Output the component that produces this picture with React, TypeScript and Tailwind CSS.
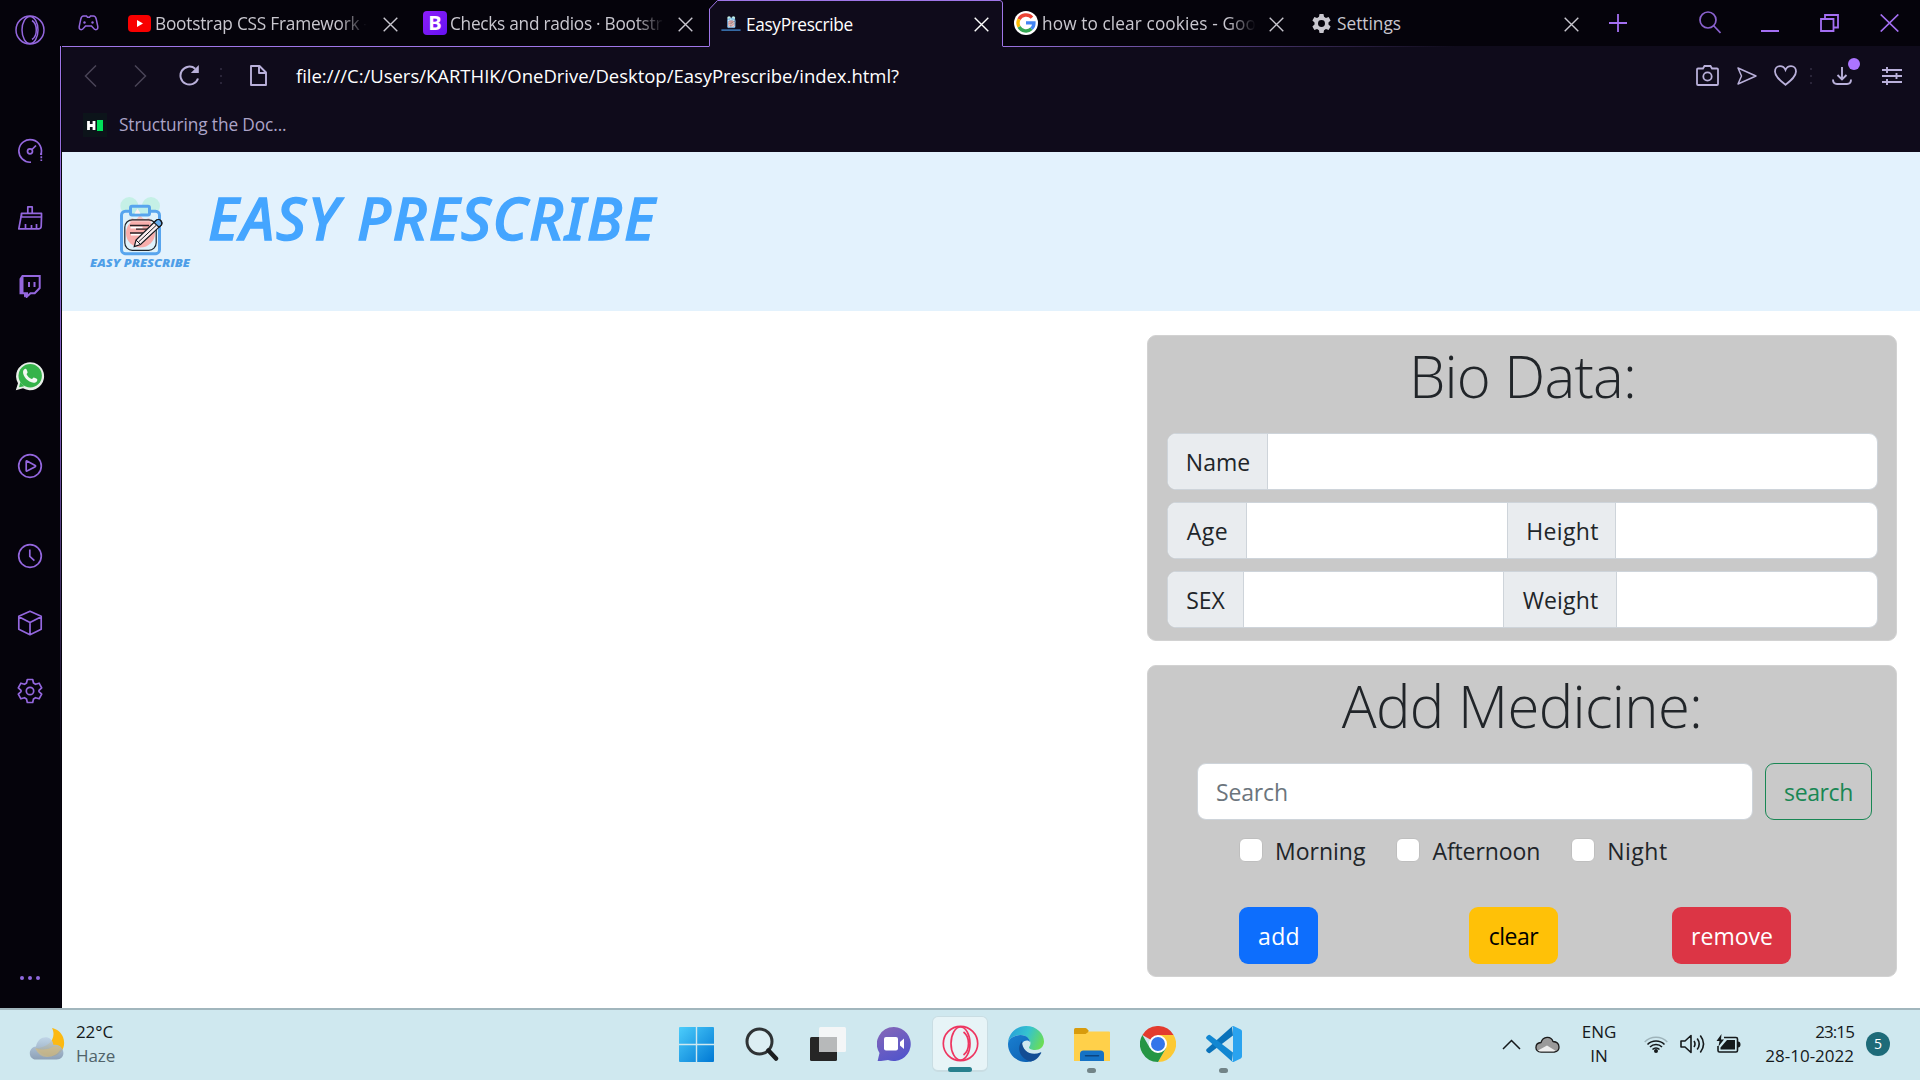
import React, { ReactNode } from "react";

function Svg({ w, h, box, className = "", children }: { w: number; h: number; box?: string; className?: string; children: ReactNode }) {
  return (
    <svg width={w} height={h} viewBox={box ?? `0 0 ${w} ${h}`} fill="none" stroke="currentColor" className={`shrink-0 ${className}`}>
      {children}
    </svg>
  );
}

/* ---------- Browser sidebar ---------- */

function Sidebar() {
  return (
    <aside className="flex w-[60px] shrink-0 flex-col items-center bg-[#05030b] text-[#9467de]">
      <Svg w={30} h={30} className="mt-[15px]">
        <circle cx="15" cy="15" r="14" strokeWidth="1.5" />
        <ellipse cx="15" cy="15" rx="8" ry="13.5" strokeWidth="1.5" />
        <path d="M17 5.500c3.200 2 4.300 5.500 4.300 9.500s-1.100 7.500-4.300 9.500" strokeWidth="1.500" />
      </Svg>
      <Svg w={26} h={26} className="mt-[93px]" box="0 0 26 26">
        <g strokeWidth="1.700">
          <path d="M14 24.200A11.300 11.300 0 1 1 23.700 17" strokeDasharray="60 100" />
          <circle cx="13" cy="13.300" r="2.500" />
          <path d="M15 11.500l4-4" />
          <path d="M24.300 15v8" strokeDasharray="2 1.300" />
        </g>
      </Svg>
      <Svg w={26} h={26} className="mt-[41px]" box="0 0 26 26">
        <g strokeWidth="1.700" strokeLinejoin="round">
          <path d="M10.800 7.500V1.800h4.400v5.700M4.500 12V8.300h20V12M4.500 8.300L4 12h20M4 12L1.800 23.800H22q2 0 2.200-2.500L24.500 12M8.500 23v-4M14.500 23v-3M19.500 23v-4" />
        </g>
      </Svg>
      <Svg w={24} h={24} className="mt-[43px]" box="0 0 24 24">
        <path d="M4.500 2h17.200v12l-5 5.300h-4.200L9 22.500v-3.200H2.500V5z" strokeWidth="2" />
        <path d="M2.500 5v14.300h3V2z" fill="currentColor" strokeWidth="0" />
        <path d="M6.500 19.300v3.500h3z" fill="currentColor" strokeWidth="1" />
        <path d="M11 8v5M16.500 8v5" strokeWidth="2" />
      </Svg>
      <Svg w={30} h={30} className="mt-[63px]">
        <path d="M.8 29.300l2.200-7A14 14 0 1 1 8 27.300z" fill="#e9efe9" strokeWidth="0" />
        <circle cx="15.200" cy="14.800" r="11.700" fill="#35b34a" strokeWidth="0" />
        <path d="M4 26.200l1.300-5 4 4z" fill="#35b34a" strokeWidth="0" />
        <path d="M8 11c0-2 1.700-3.500 2.900-3.200.6.100 1.800 3.200 1.700 3.700-.1.600-1.200 1.300-1 1.800 1 2.200 2.900 3.900 5.200 4.800.6.200 1.300-1.600 1.900-1.600.6 0 3.500 1.300 3.600 1.900.3 1.900-2 3.500-3.700 3.400C13 21.300 8 15.500 8 11z" fill="#f3f8f3" strokeWidth="0" />
      </Svg>
      <Svg w={26} h={26} className="mt-[62px]">
        <circle cx="13" cy="13" r="11.300" strokeWidth="1.700" />
        <path d="M9.200 8.500v9q0 .8.800.5l8.200-4.300q.8-.7 0-1.200L10 8q-.8-.3-.8.500z" strokeWidth="1.700" />
      </Svg>
      <Svg w={26} h={26} className="mt-[64px]">
        <circle cx="13" cy="13" r="11.300" strokeWidth="1.700" />
        <path d="M12.800 6.500v7l4.600 4.200" strokeWidth="1.700" />
      </Svg>
      <Svg w={26} h={26} className="mt-[41px]">
        <path d="M13 1.300l11.200 5v13L13 24.700 1.800 19.300v-13zM1.800 6.800L13 12.500l11.200-5.700M13 12.500v12" strokeWidth="1.700" strokeLinejoin="round" />
      </Svg>
      <Svg w={26} h={26} className="mt-[42px]">
        <path d="M10.300 1.500h5.400l.8 3.600 2 1.200 3.600-1.100 2.600 4.600-2.700 2.500v1.400l2.700 2.500-2.600 4.600-3.600-1.100-2 1.200-.8 3.600h-5.400l-.8-3.600-2-1.200-3.600 1.100-2.600-4.600L4 13.700v-1.400L1.300 9.800l2.600-4.600 3.600 1.100 2-1.200z" strokeWidth="1.700" strokeLinejoin="round" />
        <circle cx="13" cy="13" r="3.700" strokeWidth="1.700" />
      </Svg>
      <div className="mt-[272px] flex gap-1">
        <i className="size-1 rounded-full bg-[#8f68dd]" />
        <i className="size-1 rounded-full bg-[#8f68dd]" />
        <i className="size-1 rounded-full bg-[#8f68dd]" />
      </div>
    </aside>
  );
}

/* ---------- Tab strip ---------- */

function Cross({ className = "" }: { className?: string }) {
  return (
    <Svg w={15} h={15} className={className}>
      <path d="M.7.7l13.600 13.600M14.300.7L.7 14.300" strokeWidth="1.400" />
    </Svg>
  );
}

function ClipboardMark() {
  return (
    <>
      <circle cx="40.300" cy="12" r="9" fill="#c5f0e6" strokeWidth="0" />
      <circle cx="62" cy="12" r="9" fill="#c5f0e6" strokeWidth="0" />
      <rect x="32.500" y="17.200" width="38" height="42.500" rx="4" fill="#dff2fb" stroke="#58a5ee" strokeWidth="3" />
      <circle cx="51.500" cy="39" r="14.500" fill="#f8aeac" strokeWidth="0" />
      <path d="M40 28l3-4 4 2 4-5 4 5 5-2 3 4z" fill="#f8c1bf" strokeWidth="0" />
      <rect x="41.500" y="12.300" width="19" height="8.700" rx="1.500" fill="#bdeeea" stroke="#58a5ee" strokeWidth="3" />
      <path d="M45.500 19.500l3-5 3 5z" fill="#fdeef0" strokeWidth="0" />
      <rect x="35.800" y="25.800" width="31.400" height="30.500" rx="7.500" stroke="#20252b" strokeWidth="1.200" />
      <path d="M41.500 33.500h12M42 40.500h12" stroke="#fff" strokeWidth="2" />
      <path d="M41 31.500h19M47 35.200h12M41 39h13" stroke="#2a2225" strokeWidth="1.300" />
      <path d="M45.300 52.500l1.700-6.500L67 26.500q2.300-2 4.600 0 2.200 2.600.6 4.600L51.500 50.500z" fill="#fbeef0" stroke="#15191e" strokeWidth="1.200" />
      <path d="M65 28.500l2-2q2.300-2 4.600 0 2.200 2.600.6 4.600l-2.200 2z" fill="#68aeef" stroke="#15191e" strokeWidth="1.200" />
      <path d="M47 46l4.500 4.500M49.500 48l17.500-16.500" stroke="#15191e" strokeWidth="1" />
    </>
  );
}

function GoogleMark() {
  return (
    <Svg w={24} h={24}>
      <circle cx="12" cy="12" r="12" fill="#fff" strokeWidth="0" />
      <g strokeWidth="3.400">
        <path d="M18 6.600A8 8 0 0 0 5 8.200" stroke="#ea4335" />
        <path d="M5 8.200a8 8 0 0 0 0 7.600" stroke="#fbbc05" />
        <path d="M5 15.800a8 8 0 0 0 12.400 2" stroke="#34a853" />
        <path d="M17.400 17.800a8 8 0 0 0 2.500-5.900H12" stroke="#4285f4" />
      </g>
    </Svg>
  );
}

function TabTitle({ className, children }: { className: string; children: ReactNode }) {
  return <span className={`mt-0.5 shrink-0 whitespace-nowrap text-[17.25px] leading-6 ${className}`}>{children}</span>;
}

const fade = "[mask-image:linear-gradient(to_right,black_86%,transparent_99%)]";

function TabStrip() {
  return (
    <header className="flex h-[46px] shrink-0 bg-[#05030b] text-[#c9c7cf]">
      <Svg w={21} h={16} className="ml-[16px] mt-[15px] text-[#9467de]">
        <path d="M5.500 1h3l1 1.300h2l1-1.300h3q2 0 2.700 3l1.600 7.500q.3 3.200-2 3.200-1.500 0-2.800-2l-1.500-1.700h-6l-1.500 1.700q-1.300 2-2.800 2-2.300 0-2-3.200L2.800 4Q3.500 1 5.500 1z" strokeWidth="1.500" />
        <circle cx="6.500" cy="7.500" r="1.200" fill="currentColor" strokeWidth="0" />
        <circle cx="14.500" cy="7.500" r="1.200" fill="currentColor" strokeWidth="0" />
      </Svg>

      <div className="ml-[21px] flex h-full w-[295px] items-center pl-2">
        <Svg w={23} h={17} className="mt-px">
          <rect width="23" height="17" rx="4" fill="#f80000" strokeWidth="0" />
          <path d="M9 5v7l6-3.500z" fill="#fff" strokeWidth="0" />
        </Svg>
        <TabTitle className={`ml-1 w-[214px] tracking-[-0.22px] ${fade}`}>Bootstrap CSS Framework -</TabTitle>
        <Cross className="ml-[14px] mt-0.5" />
      </div>

      <div className="flex h-full w-[294px] items-center pl-2">
        <span className="flex h-6 w-6 items-center justify-center rounded-[4px] bg-linear-to-br from-[#8c1cfa] to-[#6610f2] text-[20px] font-bold leading-none text-white">B</span>
        <TabTitle className={`ml-[3px] w-[216px] tracking-[-0.27px] ${fade}`}>Checks and radios · Bootstr</TabTitle>
        <Cross className="ml-[12px] mt-0.5" />
      </div>

      <div className="relative z-10 -mb-px flex h-[47px] w-[294px] items-center text-white">
        <Svg w={294} h={47} className="absolute left-0 top-0">
          <path d="M0 46.500q.5 0 .5-1.500V9L8.500.5H291q2.500.5 2.500 2.500v42q0 1.500.5 1.500V47H0z" fill="#0f0b1b" strokeWidth="0" />
          <path d="M0 46.500q.5 0 .5-1.500V9L8.500.5H291q2.500.5 2.500 2.500v42q0 1.500.5 1.500" stroke="#9f76e8" strokeWidth="1" />
        </Svg>
        <Svg w={20} h={17} box="0 0 100 78" className="relative ml-[12px]">
          <ClipboardMark />
          <path d="M2 72h96" stroke="#3f83c8" strokeWidth="7" />
        </Svg>
        <TabTitle className="relative ml-[5px] w-[216px] tracking-[-0.35px]">EasyPrescribe</TabTitle>
        <Cross className="relative ml-[12px] mt-0.5" />
      </div>

      <div className="flex h-full w-[295px] items-center pl-[11px]">
        <GoogleMark />
        <TabTitle className={`ml-1 w-[216px] tracking-[0.1px] ${fade}`}>how to clear cookies - Goo</TabTitle>
        <Cross className="ml-[11px] mt-0.5" />
      </div>

      <div className="flex h-full w-[294px] items-center pl-[14px]">
        <Svg w={19} h={19} box="0 0 24 24">
          <path
            fill="currentColor"
            strokeWidth="0"
            fillRule="evenodd"
            d="M9.500 0h5l.7 3.600 2.400 1.400L21 3.800l2.500 4.400-2.700 2.400v2.800l2.700 2.400L21 20.200 17.600 19l-2.400 1.400-.7 3.600h-5l-.7-3.600L6.400 19 3 20.200.5 15.800l2.700-2.400v-2.800L.5 8.200 3 3.800 6.400 5l2.400-1.400zM12 7.600a4.400 4.400 0 1 0 0 8.800 4.400 4.400 0 0 0 0-8.800z"
          />
        </Svg>
        <TabTitle className="ml-[6px] w-[216px]">Settings</TabTitle>
        <Cross className="ml-[11px] mt-0.5" />
      </div>

      <div className="flex flex-1 items-center text-[#a46ff2]">
        <Svg w={18} h={18} className="ml-[17px]">
          <path d="M9 0v18M0 9h18" strokeWidth="1.800" />
        </Svg>
        <Svg w={22} h={23} className="-mt-0.5 ml-[72px] text-[#8a62cf]">
          <circle cx="9" cy="9" r="8" strokeWidth="1.700" />
          <path d="M14.500 14.500l7 7.500" strokeWidth="1.700" />
        </Svg>
        <Svg w={18} h={2} className="ml-[40px] mt-4">
          <path d="M0 1h18" strokeWidth="2" />
        </Svg>
        <Svg w={19} h={18} className="ml-[41px]">
          <path d="M1 5h12.500v12H1zM5 5V1h13v12.500h-4.500" strokeWidth="1.800" />
        </Svg>
        <Svg w={19} h={18} className="ml-[41px]">
          <path d="M.7.500l17.600 17M18.300.500L.7 17.500" strokeWidth="1.700" />
        </Svg>
      </div>
    </header>
  );
}

/* ---------- Toolbar and bookmarks ---------- */

function Dots() {
  return (
    <div className="flex flex-col gap-[5px]">
      <i className="size-[2px] bg-[#2a2539]" />
      <i className="size-[2px] bg-[#2a2539]" />
      <i className="size-[2px] bg-[#2a2539]" />
    </div>
  );
}

function Toolbar() {
  return (
    <div className="flex h-[57px] shrink-0 items-center text-[#b9b0da]">
      <Svg w={13} h={22} className="ml-[22px] text-[#494457]">
        <path d="M12 .5L1.500 11 12 21.500" strokeWidth="1.500" />
      </Svg>
      <Svg w={13} h={22} className="ml-[37px] text-[#494457]">
        <path d="M1 .5L11.500 11 1 21.500" strokeWidth="1.500" />
      </Svg>
      <Svg w={21} h={21} className="ml-[32px]">
        <path d="M19 13.500a9 9 0 1 1-2.700-9.800" strokeWidth="2" />
        <path d="M19.800 0v8h-8z" fill="currentColor" strokeWidth="0" />
      </Svg>
      <div className="ml-[20px]">
        <Dots />
      </div>
      <Svg w={17} h={21} className="ml-[28px]">
        <path d="M1 1h8.500l6.500 6.500V20H1zM9 1v7h7" strokeWidth="1.900" strokeLinejoin="round" />
      </Svg>
      <span className="ml-[29px] text-[18.5px] tracking-[-0.02px] text-white">file:///C:/Users/KARTHIK/OneDrive/Desktop/EasyPrescribe/index.html?</span>
      <Svg w={23} h={21} className="ml-auto">
        <path d="M1 4.500q0-1 1-1h5L8.500 1h6L16 3.500h5q1 0 1 1V19q0 1-1 1H2q-1 0-1-1z" strokeWidth="1.800" />
        <circle cx="11.500" cy="11.500" r="4.200" strokeWidth="1.800" />
      </Svg>
      <Svg w={20} h={18} className="ml-[18px]">
        <path d="M1 1l18 8L1 17l3.500-8z" strokeWidth="1.500" strokeLinejoin="round" />
      </Svg>
      <Svg w={23} h={21} className="ml-[17px]">
        <path d="M11.500 19.800C6 15.500 1 11.500 1 6.500 1 3.500 3 1.200 6 1.200c2.500 0 4.500 1.500 5.500 3.800 1-2.300 3-3.800 5.500-3.800 3 0 5 2.300 5 5.300 0 5-5 9-10.500 13.300z" strokeWidth="1.800" />
      </Svg>
      <div className="ml-[13px]">
        <Dots />
      </div>
      <div className="relative ml-[20px]">
        <Svg w={20} h={18}>
          <path d="M10 0v12M5.500 8l4.500 4.500L14.500 8M1 12.500q0 4.500 4 4.500h10q4 0 4-4.500" strokeWidth="1.900" />
        </Svg>
        <i className="absolute -top-[9px] left-4 size-3 rounded-full bg-[#ac74ff]" />
      </div>
      <Svg w={20} h={18} className="ml-[30px] mr-[18px]">
        <path d="M0 3h20M0 9h20M0 15h20M5 0v6M14.500 6v6M5 12v6" strokeWidth="1.900" />
      </Svg>
    </div>
  );
}

function Bookmarks() {
  return (
    <div className="flex h-[48px] shrink-0 items-start pt-[9px]">
      <div className="ml-[21px] flex h-6 w-6 items-center justify-center bg-[#0c141a]">
        <Svg w={16} h={11}>
          <path d="M1.500 1v9M7 1v9M1.500 5.500H7" stroke="#fff" strokeWidth="2.800" />
          <rect x="10" y="0" width="6" height="11" fill="#00e05a" strokeWidth="0" />
        </Svg>
      </div>
      <span className="ml-[12px] text-[17.25px] leading-6 tracking-[-0.1px] text-[#aca4c8]">Structuring the Doc...</span>
    </div>
  );
}

/* ---------- Page ---------- */

function Addon({ className, children }: { className: string; children: ReactNode }) {
  return <span className={`flex shrink-0 items-center justify-center border-[#ced4da] bg-[#e9ecef] ${className}`}>{children}</span>;
}

const group = "flex h-[57px] overflow-hidden rounded-[9px] border border-[#ced4da] bg-white";

function BioData() {
  return (
    <section className="flex h-[306px] flex-col rounded-[9px] border border-[#d2d2d2] bg-[#c9c9c9] pl-[19px] pr-[18px]">
      <h2 className="mt-[4px] text-center text-[58px] font-light leading-[72px] tracking-[-0.78px]">Bio Data:</h2>
      <div className="mt-[21px] flex flex-col gap-3">
        <div className={group}>
          <Addon className="w-[100px] border-r pl-px">Name</Addon>
          <input className="min-w-0 flex-1" />
        </div>
        <div className={group}>
          <Addon className="w-[79px] border-r pl-px tracking-[0.5px]">Age</Addon>
          <input className="w-[260px]" />
          <Addon className="w-[109px] border-x pl-0.5 tracking-[0.3px]">Height</Addon>
          <input className="min-w-0 flex-1" />
        </div>
        <div className={group}>
          <Addon className="w-[76px] border-r">SEX</Addon>
          <input className="w-[259px]" />
          <Addon className="w-[114px] border-x pl-px tracking-[0.15px]">Weight</Addon>
          <input className="min-w-0 flex-1" />
        </div>
      </div>
    </section>
  );
}

function Check({ className = "", label }: { className?: string; label: ReactNode }) {
  return (
    <label className={`flex items-center ${className}`}>
      <input type="checkbox" className="mr-3 size-6 -translate-y-px appearance-none rounded-[6px] border border-[#bfbfbf] bg-white" />
      {label}
    </label>
  );
}

const btn = "flex h-[57px] items-center justify-center rounded-[9px]";

function AddMedicine() {
  return (
    <section className="mt-6 flex h-[312px] flex-col rounded-[9px] border border-[#d2d2d2] bg-[#c9c9c9]">
      <h2 className="mt-[4px] text-center text-[58px] font-light leading-[72px] tracking-[-0.66px]">Add Medicine:</h2>
      <div className="ml-[49px] mt-[21px] flex gap-3">
        <input placeholder="Search" className="h-[57px] w-[556px] rounded-[9px] border border-[#ced4da] bg-white pl-[18px] tracking-[-0.15px] placeholder:text-[#6c757d]" />
        <button className={`${btn} w-[107px] border-[1.5px] border-[#198754] tracking-[-0.4px] text-[#198754]`}>search</button>
      </div>
      <div className="ml-[91px] mt-[13px] flex h-9">
        <Check label="Morning" />
        <Check label="Afternoon" className="ml-[31px] tracking-[-0.1px]" />
        <Check label="Night" className="ml-[31px] tracking-[0.5px]" />
      </div>
      <div className="mt-[38px] flex">
        <button className={`${btn} ml-[91px] w-[79px] bg-[#0d6efd] pl-px tracking-[0.3px] text-white`}>add</button>
        <button className={`${btn} ml-[151px] w-[89px] bg-[#ffc107] tracking-[-0.5px] text-black`}>clear</button>
        <button className={`${btn} ml-[114px] w-[119px] bg-[#dc3545] pl-px text-white`}>remove</button>
      </div>
    </section>
  );
}

function Page() {
  return (
    <main className="flex flex-1 flex-col bg-white text-[23px] leading-9 text-[#212529]">
      <nav className="flex h-[159px] shrink-0 items-start bg-[#e3f2fd]">
        <Svg w={102} h={78} className="ml-[27px] mt-[42px]">
          <ClipboardMark />
          <text x="1" y="72.800" textLength="100" lengthAdjust="spacingAndGlyphs" className="font-['Open_Sans'] text-[10.5px] font-extrabold italic" fill="#4f9fe8" strokeWidth="0">
            EASY PRESCRIBE
          </text>
        </Svg>
        <h1 className="ml-[17px] mt-[20px] font-['Noto_Sans'] text-[58.5px] font-medium italic leading-[90px] tracking-[1.7px] text-[#44a5ff] [-webkit-text-stroke:1.4px_#44a5ff]">EASY PRESCRIBE</h1>
      </nav>
      <div className="ml-auto mr-[23px] mt-6 w-[750px]">
        <BioData />
        <AddMedicine />
      </div>
    </main>
  );
}

/* ---------- Taskbar ---------- */

function TaskIcon({ active, running, children }: { active?: boolean; running?: boolean; children: ReactNode }) {
  return (
    <div className={`relative flex h-14 w-14 items-center justify-center rounded-md ${active ? "border border-b-2 border-[#c9dde3] bg-[#e7f4f7]" : ""}`}>
      {children}
      {active && <i className="absolute -bottom-[2px] left-[15px] h-[5px] w-6 rounded-full bg-[#28808e]" />}
      {running && <i className="absolute -bottom-px left-[23px] h-[5px] w-[9px] rounded-full bg-[#728488]" />}
    </div>
  );
}

function Taskbar() {
  return (
    <footer className="flex h-[72px] shrink-0 items-center border-t-2 border-[#a1b6bd] bg-[#cfe8ef] pb-0.5 text-[17px] leading-6 text-[#15191b]">
      <div className="flex w-[668px] items-center pl-[29px]">
        <Svg w={36} h={32}>
          <defs>
            <linearGradient id="cloud" x1="0" y1="0" x2="0" y2="1">
              <stop offset="0" stopColor="#bdd2e6" />
              <stop offset="1" stopColor="#8496ae" />
            </linearGradient>
          </defs>
          <path d="M23 0c5 10-3 20-16 20 4 7 12 9 18 8 9-2 12-11 9-19-2-5-6-8-11-9z" fill="#fcb912" strokeWidth="0" />
          <path d="M7 31.500c-8 0-8.500-12 0-13C9 7 23 6 24.500 17c11-2 14 14.500 3 14.500z" fill="url(#cloud)" fillOpacity="0.88" strokeWidth="0" />
          <path d="M6 20q9 4 20-2 6 0 6 3-5 8-14 8-8 0-12-9z" fill="#d8bd79" fillOpacity="0.6" strokeWidth="0" />
        </Svg>
        <div className="ml-[11px] tracking-[-0.1px]">
          <div>22°C</div>
          <div className="text-[#50636a]">Haze</div>
        </div>
      </div>

      <div className="flex gap-[10px]">
        <TaskIcon>
          <Svg w={35} h={35}>
            <defs>
              <linearGradient id="win" x1="0" y1="0" x2="1" y2="1">
                <stop offset="0" stopColor="#4ccdfb" />
                <stop offset="1" stopColor="#0078d4" />
              </linearGradient>
            </defs>
            <path d="M1 0h15.800v16.800H0V1q0-1 1-1zM18.200 0H34q1 0 1 1v15.800H18.200zM0 18.200h16.800V35H1q-1 0-1-1zM18.200 18.200H35V34q0 1-1 1H18.200z" fill="url(#win)" strokeWidth="0" />
          </Svg>
        </TaskIcon>
        <TaskIcon>
          <Svg w={34} h={34}>
            <circle cx="14.500" cy="14.500" r="12.500" stroke="#2f3335" strokeWidth="3" fill="#dceef3" />
            <path d="M23.500 23.500l7.500 8" stroke="#1b1d1f" strokeWidth="4.500" strokeLinecap="round" />
          </Svg>
        </TaskIcon>
        <TaskIcon>
          <Svg w={36} h={34}>
            <rect y="10" width="27" height="24" rx="1.500" fill="#262626" strokeWidth="0" />
            <rect x="9" y="0" width="27" height="25" rx="1.500" fill="#f4f6f7" strokeWidth="0" />
            <path d="M9 10h18v15H9z" fill="#b7b9ba" strokeWidth="0" />
          </Svg>
        </TaskIcon>
        <TaskIcon>
          <Svg w={34} h={34}>
            <defs>
              <linearGradient id="chat" x1="0.2" y1="0" x2="0.7" y2="1">
                <stop offset="0" stopColor="#8466b8" />
                <stop offset="1" stopColor="#5054cc" />
              </linearGradient>
            </defs>
            <path d="M17 0a17 17 0 1 1-6 33L.5 34.500 2.500 26A17 17 0 0 1 17 0z" fill="url(#chat)" strokeWidth="0" />
            <rect x="7" y="10" width="14" height="13.500" rx="2" fill="#fff" strokeWidth="0" />
            <path d="M23 15l4-3.500v10.500l-4-3.500z" fill="#fff" strokeWidth="0" />
          </Svg>
        </TaskIcon>
        <TaskIcon active>
          <Svg w={37} h={37} className="text-[#ee3560]">
            <circle cx="18.500" cy="18.500" r="17.200" strokeWidth="1.700" />
            <ellipse cx="18.500" cy="18.500" rx="9.500" ry="16.500" strokeWidth="1.700" />
            <path d="M21.500 7c3.500 2.500 5 7 5 11.500s-1.500 9-5 11.500" strokeWidth="1.700" />
          </Svg>
        </TaskIcon>
        <TaskIcon>
          <Svg w={36} h={36}>
            <defs>
              <linearGradient id="edgeTop" x1="0" y1="0.3" x2="1" y2="0.6">
                <stop offset="0" stopColor="#279fd9" />
                <stop offset="0.5" stopColor="#35c3cf" />
                <stop offset="1" stopColor="#6bdd55" />
              </linearGradient>
              <linearGradient id="edgeLow" x1="0" y1="0" x2="0.8" y2="1">
                <stop offset="0" stopColor="#1a7fd0" />
                <stop offset="1" stopColor="#0d62b4" />
              </linearGradient>
            </defs>
            <path d="M0 18C0 8 8 0 18 0c11 0 18 8 18 15.500 0 5-4 8.500-9 8.500-3.500 0-6-1.200-6-2.500 0-1 1.500-1.500 1.500-4.500 0-3-4-8-10-8C6 9 0 13 0 18z" fill="url(#edgeTop)" strokeWidth="0" />
            <path d="M0 18c0-5 6-9 12.500-9 6.500 0 9.500 4.500 9.500 7-4-4-11 1-8.500 8.500C16 32 24 34 26.500 34 15 40 0 32 0 18z" fill="url(#edgeLow)" strokeWidth="0" />
            <path d="M14 15c-6 7-2 18 9 20.500 4-.8 8-4 10.200-8.500.3-.8-.2-1-.9-.6C24 30 14 26 14 15z" fill="#124d94" strokeWidth="0" />
          </Svg>
        </TaskIcon>
        <TaskIcon running>
          <Svg w={36} h={33}>
            <path d="M0 1.500Q0 0 1.500 0h10q1.500 0 3 2.500V7H0z" fill="#d89b0c" strokeWidth="0" />
            <path d="M0 6h11.500L15 3.500h20q1 0 1 1V33H0z" fill="#ffd04a" strokeWidth="0" />
            <path d="M6 33v-7q0-3.500 3.500-3.500h17Q30 22.500 30 26v7z" fill="#1572c5" strokeWidth="0" />
            <path d="M11.500 27.800h13" stroke="#0b4480" strokeWidth="1.500" strokeLinecap="round" />
          </Svg>
        </TaskIcon>
        <TaskIcon>
          <Svg w={36} h={36}>
            <path d="M18 18L2.400 9A18 18 0 0 1 33.600 9z" fill="#e33b2e" strokeWidth="0" />
            <path d="M18 9h15.600A18 18 0 0 1 18 36l7.800-13.500z" fill="#fcc934" strokeWidth="0" />
            <path d="M2.400 9A18 18 0 0 0 18 36l7.800-13.500L18 18 10.200 22.500z" fill="#259645" strokeWidth="0" />
            <circle cx="18" cy="18" r="8" fill="#3376ea" stroke="#fff" strokeWidth="2" />
          </Svg>
        </TaskIcon>
        <TaskIcon running>
          <Svg w={36} h={36}>
            <path d="M27 9.500L4 27q-1 .5-2-.3l-1.300-1.200q-1.200-1.200 0-2.500L26 .5z" fill="#0a72ba" strokeWidth="0" />
            <path d="M27 26.500L4 9q-1-.5-2 .3L.7 10.500q-1.200 1.200 0 2.500L26 35.500z" fill="#1287d2" strokeWidth="0" />
            <path d="M26 .3Q27-.2 28 .3l6.800 3.300Q36 4.200 36 5.500v25q0 1.300-1.200 1.900L28 35.700q-1 .5-2 0l1-1V1.500z" fill="#2aa3ef" strokeWidth="0" />
          </Svg>
        </TaskIcon>
      </div>

      <div className="ml-auto flex items-center">
        <Svg w={19} h={11}>
          <path d="M1 10l8.500-8.500L18 10" strokeWidth="1.500" />
        </Svg>
        <Svg w={25} h={17} className="ml-[14px]">
          <path d="M6 16c-7 0-6.500-9 0-9.500C8 0 16-.5 18 5.500c8 .5 7.500 10.500 1.500 10.500z" fill="#9a9a9a" stroke="#1a1a1a" strokeWidth="1.300" />
          <path d="M3 14.500l9-5 8.500 5.300q-1 .6-2 .6H6q-2 0-3-.9z" fill="#eee" strokeWidth="0" />
        </Svg>
        <div className="ml-[19px] w-10 text-center text-[17px]">
          <div>ENG</div>
          <div>IN</div>
        </div>
        <Svg w={24} h={18} className="ml-[25px]">
          <path d="M.7 7a16 16 0 0 1 22.600 0" stroke="#9eb3ba" strokeWidth="1.500" />
          <path d="M3.500 9.500a12 12 0 0 1 17 0M6 12a8.500 8.500 0 0 1 12 0" strokeWidth="1.600" />
          <path d="M8.500 14.500a5 5 0 0 1 7 0" strokeWidth="1.600" />
          <circle cx="12" cy="16" r="2" fill="currentColor" strokeWidth="0" />
        </Svg>
        <Svg w={25} h={20} className="ml-[12px]">
          <path d="M1 7h4l6-5.500v17L5 13H1zM14 7q2 3 0 6M17.200 4.500q4 5.500 0 11M20.300 1.500q6.500 8.500 0 17" strokeWidth="1.600" strokeLinejoin="round" />
        </Svg>
        <Svg w={25} h={20} className="ml-[11px]">
          <path d="M8 3.500h12q1.500 0 1.500 1.500v11.500q0 1.500-1.500 1.500H3.500Q2 18 2 16.500V12" strokeWidth="1.600" />
          <path d="M11 6h8v9.500H4.500v-2zM22 7.500q2.500 0 2.500 3t-2.500 3zM5.500 0L.5 7h3L2.500 12.500 8 5.500H5z" fill="currentColor" strokeWidth="0" />
        </Svg>
        <div className="ml-[19px] w-[94px] text-right">
          <div className="tracking-[-0.9px]">23:15</div>
          <div>28-10-2022</div>
        </div>
        <div className="ml-[12px] mr-[30px] flex size-6 items-center justify-center rounded-full bg-[#1e6b79] text-[14px] leading-none text-white">5</div>
      </div>
    </footer>
  );
}

export default function App() {
  return (
    <div className="flex h-[1080px] w-[1920px] flex-col overflow-hidden bg-[#0f0b1b] font-['Open_Sans','Noto_Sans',sans-serif]">
      <div className="flex h-[1008px] shrink-0">
        <Sidebar />
        <div className="flex flex-1">
          <div className="flex w-[2px] shrink-0 flex-col bg-[#05030b]">
            <div className="mt-[46px] w-px flex-1 bg-linear-to-b from-[#9f76e8] via-[#7d5cb8] via-40% to-[#0a0713] to-75%" />
          </div>
          <div className="flex w-[1858px] flex-col">
            <TabStrip />
            <div className="h-px shrink-0 bg-linear-to-r from-[#9f76e8] from-50% to-[#0f0b1b] to-75%" />
            <Toolbar />
            <Bookmarks />
            <Page />
          </div>
        </div>
      </div>
      <Taskbar />
    </div>
  );
}
